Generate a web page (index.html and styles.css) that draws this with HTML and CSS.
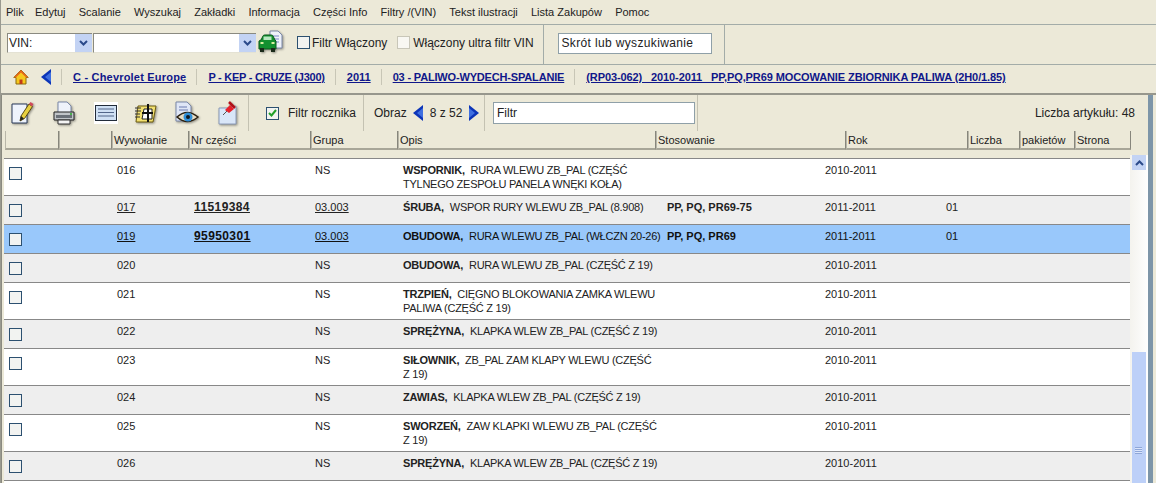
FILE: index.html
```html
<!DOCTYPE html>
<html lang="pl">
<head>
  <meta charset="UTF-8" />
  <title>Katalog części</title>
  <link rel="stylesheet" href="styles.css">
</head>
<body>

  <div class="menubar">
    <span>Plik</span><span>Edytuj</span><span>Scalanie</span><span>Wyszukaj</span><span>Zakładki</span><span>Informacja</span><span>Części Info</span><span>Filtry /(VIN)</span><span>Tekst ilustracji</span><span>Lista Zakupów</span><span>Pomoc</span>
  </div>

  <div class="vinbar">
    <div class="combo vin-type">
      <span class="combo-text">VIN:</span>
      <span class="combo-btn"><svg width="9" height="6" viewBox="0 0 9 6"><path d="M1 1l3.5 3.5L8 1" fill="none" stroke="#2b4a8a" stroke-width="2"/></svg></span>
    </div>
    <div class="combo vin-value">
      <span class="combo-text"></span>
      <span class="combo-btn"><svg width="9" height="6" viewBox="0 0 9 6"><path d="M1 1l3.5 3.5L8 1" fill="none" stroke="#2b4a8a" stroke-width="2"/></svg></span>
    </div>
    <svg class="car-icon" width="25" height="24" viewBox="0 0 25 24">
      <path d="M12 1h8l4 4v13H12z" fill="#eef2fa" stroke="#7a88a8"/>
      <path d="M15 6h6M15 9h6M15 12h6" stroke="#7a88c8"/>
      <path d="M3 10l2-4q.4-1 1.500-1h7q1.100 0 1.500 1l2 4 1 1v8H1v-8z" fill="#13902f" stroke="#0a5a1c"/>
      <rect x="5.500" y="6.500" width="8" height="3.500" fill="#b8e8c0"/>
      <rect x="2.500" y="12" width="3" height="2" fill="#d8f0a0"/>
      <rect x="13.500" y="12" width="3" height="2" fill="#d8f0a0"/>
      <rect x="2" y="18" width="4" height="4" fill="#1a2a1a"/>
      <rect x="13" y="18" width="4" height="4" fill="#1a2a1a"/>
    </svg>
    <label class="check filter-on"><span class="box"></span>Filtr Włączony</label>
    <label class="check filter-ultra"><span class="box box-off"></span>Włączony ultra filtr VIN</label>
    <div class="shortcut-cell">
      <div class="text-input shortcut">Skrót lub wyszukiwanie</div>
    </div>
  </div>

  <div class="crumbs">
    <svg class="home-icon" width="16" height="16" viewBox="0 0 16 16">
      <path d="M8 1L.8 8.500h2.200V15h10V8.500h2.200z" fill="#f6c81e" stroke="#8a6a10"/>
      <path d="M6.500 15v-4.500h3V15" fill="#c03a1a"/>
      <path d="M8 1L.8 8.500h2L8 3.500l5.200 5h2z" fill="#e8651a"/>
    </svg>
    <svg class="back-icon" width="11" height="16" viewBox="0 0 11 16"><path d="M10 0v16L0 8z" fill="#0c35b8"/><path d="M10 3v10L4 8z" fill="#3f6fe0"/></svg>
    <a class="crumb c1">C - Chevrolet Europe</a>
    <a class="crumb c2">P - KEP - CRUZE (J300)</a>
    <a class="crumb c3">2011</a>
    <a class="crumb c4">03 - PALIWO-WYDECH-SPALANIE</a>
    <a class="crumb c5">(RP03-062) &nbsp; 2010-2011 &nbsp; PP,PQ,PR69 MOCOWANIE ZBIORNIKA PALIWA (2H0/1.85)</a>
  </div>

  <div class="panel">
    <div class="panel-main">
      <div class="tools">
        <div class="tool-icons">
          <svg width="24" height="24" viewBox="0 0 24 24">
            <path d="M2 3h15v19H2z" fill="#eef3fc" stroke="#2a3a5a"/>
            <path d="M10 20l1-5L19 3l3.500 2.500-8 12z" fill="#e8d040" stroke="#5a4a10"/>
            <path d="M19 3l1.500-2 3 2-1.500 2.500z" fill="#d04a5a"/>
            <path d="M10 20l1-5 3 2.500z" fill="#222"/>
          </svg>
          <svg width="24" height="24" viewBox="0 0 24 24">
            <path d="M6 1h9l4 4v7H6z" fill="#eef2fa" stroke="#7a88a8"/>
            <path d="M2 11h20v8H2z" fill="#c0c4c8" stroke="#222"/>
            <path d="M4 14h16v3H4z" fill="#6a7078"/>
            <path d="M6 19h12v4H6z" fill="#f4f4f4" stroke="#333"/>
            <circle cx="19" cy="13" r="1" fill="#2a2"/>
          </svg>
          <svg class="flat" width="24" height="22" viewBox="0 0 24 22">
            <rect width="24" height="22" fill="#fff"/>
            <rect x="1.500" y="3.500" width="21" height="15" fill="#cfe0f4" stroke="#222c3a"/>
            <path d="M4 7h16M4 10.500h16M4 14h16" stroke="#52668a"/>
          </svg>
          <svg width="24" height="24" viewBox="0 0 24 24">
            <path d="M4 5h18l-3 16H2z" fill="#f2e070" stroke="#6a5a10"/>
            <path d="M1 7h6M1 10h6M1 13h5M1 16h5" stroke="#333"/>
            <path d="M10 8h8v10H8z" fill="#fff" stroke="#222"/>
            <path d="M14 3v18M8 12h11" stroke="#111" stroke-width="2"/>
          </svg>
          <svg width="26" height="24" viewBox="0 0 26 24">
            <path d="M2 1h11l4 4v15H2z" fill="#dfe6f6" stroke="#7a88a8"/>
            <path d="M5 6h8M5 9h9" stroke="#6a7ab0"/>
            <path d="M3 16q10-9 21 0-11 9-21 0z" fill="#e6dcc4" stroke="#2a2010" stroke-width="1.500"/>
            <circle cx="14" cy="16" r="4.500" fill="#2f8ed8"/>
            <circle cx="14" cy="16" r="2" fill="#101820"/>
          </svg>
          <svg width="20" height="24" viewBox="0 0 20 24">
            <path d="M1 7h8l9-2v18H1z" fill="#d9e6f8" stroke="#8a9ab8"/>
            <path d="M7 9l5-5 4 4-5 4z" fill="#e8202a"/>
            <path d="M11 1l6 6" stroke="#b01018" stroke-width="2.500"/>
            <path d="M9 10l-4 4" stroke="#555"/>
          </svg>
        </div>
        <label class="check year-filter">
          <span class="box box-small"><svg width="9" height="8" viewBox="0 0 9 8"><path d="M1 4l2.500 2.500L8 1" fill="none" stroke="#22a02a" stroke-width="2"/></svg></span>
          Filtr rocznika
        </label>
        <div class="pager">
          <span>Obraz</span>
          <svg width="11" height="16" viewBox="0 0 11 16"><path d="M10 0v16L0 8z" fill="#0c35b8"/><path d="M10 3v10L4 8z" fill="#3f6fe0"/></svg>
          <span>8 z 52</span>
          <svg width="11" height="16" viewBox="0 0 11 16"><path d="M1 0v16L11 8z" fill="#0c35b8"/><path d="M1 3v10L7 8z" fill="#3f6fe0"/></svg>
        </div>
        <div class="filter-cell">
          <div class="text-input filter">Filtr</div>
        </div>
        <div class="count">Liczba artykułu: 48</div>
      </div>

      <div class="grid-head">
        <div class="hc w-a"></div>
        <div class="hc w-b"></div>
        <div class="hc w-call">Wywołanie</div>
        <div class="hc w-part">Nr części</div>
        <div class="hc w-group">Grupa</div>
        <div class="hc w-desc">Opis</div>
        <div class="hc w-app">Stosowanie</div>
        <div class="hc w-year">Rok</div>
        <div class="hc w-qty">Liczba</div>
        <div class="hc w-pack">pakietów</div>
        <div class="hc w-page">Strona</div>
      </div>

      <div class="grid-wrap">
        <div class="rows">
          <div class="row">
            <span class="box"></span><div>016</div><div></div><div>NS</div>
            <div class="desc"><b>WSPORNIK,</b> RURA WLEWU ZB_PAL (CZĘŚĆ<br>TYLNEGO ZESPOŁU PANELA WNĘKI KOŁA)</div>
            <div></div><div>2010-2011</div><div></div>
          </div>
          <div class="row alt">
            <span class="box"></span><div><u>017</u></div><div class="part">11519384</div><div><u>03.003</u></div>
            <div class="desc"><b>ŚRUBA,</b> WSPOR RURY WLEWU ZB_PAL (8.908)</div>
            <div class="app">PP, PQ, PR69-75</div><div>2011-2011</div><div>01</div>
          </div>
          <div class="row selected">
            <span class="box"></span><div><u>019</u></div><div class="part">95950301</div><div><u>03.003</u></div>
            <div class="desc"><b>OBUDOWA,</b> RURA WLEWU ZB_PAL (WŁCZN 20-26)</div>
            <div class="app">PP, PQ, PR69</div><div>2011-2011</div><div>01</div>
          </div>
          <div class="row alt">
            <span class="box"></span><div>020</div><div></div><div>NS</div>
            <div class="desc"><b>OBUDOWA,</b> RURA WLEWU ZB_PAL (CZĘŚĆ Z 19)</div>
            <div></div><div>2010-2011</div><div></div>
          </div>
          <div class="row">
            <span class="box"></span><div>021</div><div></div><div>NS</div>
            <div class="desc"><b>TRZPIEŃ,</b> CIĘGNO BLOKOWANIA ZAMKA WLEWU<br>PALIWA (CZĘŚĆ Z 19)</div>
            <div></div><div>2010-2011</div><div></div>
          </div>
          <div class="row alt">
            <span class="box"></span><div>022</div><div></div><div>NS</div>
            <div class="desc"><b>SPRĘŻYNA,</b> KLAPKA WLEW ZB_PAL (CZĘŚĆ Z 19)</div>
            <div></div><div>2010-2011</div><div></div>
          </div>
          <div class="row">
            <span class="box"></span><div>023</div><div></div><div>NS</div>
            <div class="desc"><b>SIŁOWNIK,</b> ZB_PAL ZAM KLAPY WLEWU (CZĘŚĆ<br>Z 19)</div>
            <div></div><div>2010-2011</div><div></div>
          </div>
          <div class="row alt">
            <span class="box"></span><div>024</div><div></div><div>NS</div>
            <div class="desc"><b>ZAWIAS,</b> KLAPKA WLEW ZB_PAL (CZĘŚĆ Z 19)</div>
            <div></div><div>2010-2011</div><div></div>
          </div>
          <div class="row">
            <span class="box"></span><div>025</div><div></div><div>NS</div>
            <div class="desc"><b>SWORZEŃ,</b> ZAW KLAPKI WLEWU ZB_PAL (CZĘŚĆ<br>Z 19)</div>
            <div></div><div>2010-2011</div><div></div>
          </div>
          <div class="row alt">
            <span class="box"></span><div>026</div><div></div><div>NS</div>
            <div class="desc"><b>SPRĘŻYNA,</b> KLAPKA WLEW ZB_PAL (CZĘŚĆ Z 19)</div>
            <div></div><div>2010-2011</div><div></div>
          </div>
        </div>
        <div class="scrollbar">
          <div class="scroll-up"><svg width="9" height="6" viewBox="0 0 9 6"><path d="M1 5l3.500-3.500L8 5" fill="none" stroke="#2b4a8a" stroke-width="2"/></svg></div>
          <div class="scroll-thumb">
            <span class="grip"></span>
          </div>
        </div>
      </div>
    </div>
    <div class="edge"></div>
  </div>

</body>
</html>
```

FILE: styles.css
```css
body {
  margin: 0;
  height: 483px;
  overflow: hidden;
  background: #ece9d8;
  font-family: 'Liberation Sans', Arial, sans-serif;
  font-size: 11px;
  color: #222;
  border-left: 1px solid #9a9a90;
  box-sizing: border-box;
}

.menubar {
  display: flex;
  gap: 13.2px;
  height: 25px;
  padding-left: 5px;
  align-items: center;
  box-sizing: border-box;
  border-bottom: 1px solid #a3aca8;
}

.menubar span:first-child {
  margin-right: -2px;
}

.vinbar {
  display: flex;
  align-items: center;
  height: 40px;
  box-sizing: border-box;
  border-bottom: 1px solid #a3aca8;
}

.combo {
  display: flex;
  height: 20px;
  margin-bottom: 4px;
  background: #fff;
  border: 1px solid #8a8a80;
  border-right: none;
  border-bottom-color: #e4e2d4;
  box-sizing: border-box;
}

.vin-type {
  width: 85px;
  margin-left: 6px;
}

.vin-value {
  width: 163px;
  margin-left: 1px;
}

.combo-text {
  flex: 1;
  font-size: 12px;
  line-height: 18px;
  padding-left: 1px;
}

.combo-btn {
  width: 17px;
  background: #c3d3f4;
  display: flex;
  align-items: center;
  justify-content: center;
}

.car-icon {
  margin: 0 0 5px 2px;
  filter: drop-shadow(1px 1px 1px rgba(0, 0, 0, 0.4));
}

.check {
  display: flex;
  align-items: center;
  font-size: 12px;
}

.box {
  display: block;
  width: 13px;
  height: 13px;
  box-sizing: border-box;
  border: 1px solid #2c5070;
  background: #f2f3f1;
}

.box-off {
  border-color: #c8c6b8;
  background: #f8f7f2;
}

.filter-on {
  margin: 0 0 4px 14px;
  gap: 2px;
}

.filter-ultra {
  margin: 0 0 4px 10px;
  gap: 3px;
  letter-spacing: -0.05px;
}

.shortcut-cell {
  display: flex;
  align-items: center;
  align-self: stretch;
  margin-left: 9px;
  padding: 0 12px 2px 14px;
  border-left: 1px solid #a3aca8;
  border-right: 1px solid #a3aca8;
}

.text-input {
  background: #fff;
  border: 1px solid #8fa0a8;
  box-sizing: border-box;
  font-size: 12px;
  padding-left: 3px;
}

.shortcut {
  width: 154px;
  height: 21px;
  line-height: 19px;
  letter-spacing: 0.35px;
}

.crumbs {
  display: flex;
  align-items: center;
  height: 30px;
  padding-bottom: 4px;
  box-sizing: border-box;
  border-bottom: 2px solid #97978d;
}

.home-icon {
  margin-left: 12px;
}

.back-icon {
  margin-left: 12px;
  margin-right: 9px;
}

.crumb {
  font-weight: bold;
  color: #10178a;
  text-decoration: underline;
  white-space: pre;
  line-height: 16px;
  border-left: 1px solid #c8c6b6;
  padding: 0 10px 0 11px;
}

.c1 { letter-spacing: 0.2px; }
.c2 { letter-spacing: -0.25px; }
.c3 { letter-spacing: 0; }
.c4 { letter-spacing: -0.17px; }
.c5 { letter-spacing: -0.1px; }

.panel {
  display: flex;
  height: 388px;
  border-left: 1px solid #8a8a80;
}

.panel-main {
  flex: 1;
  min-width: 0;
}

.edge {
  width: 5px;
  margin-right: 3px;
  background: #7d95a8;
}

.tools {
  display: flex;
  align-items: center;
  height: 36px;
  box-sizing: border-box;
  padding-right: 13px;
}

.tool-icons {
  display: flex;
  align-items: center;
  gap: 18px;
  width: 247px;
  height: 100%;
  padding-left: 8px;
  box-sizing: border-box;
  border-right: 1px solid #c4c2b2;
}

.tool-icons svg {
  flex: none;
  filter: drop-shadow(1px 1px 1px rgba(0, 0, 0, 0.4));
}

.tool-icons svg.flat {
  filter: none;
}

.tool-icons svg:nth-child(4),
.tool-icons svg:nth-child(5) {
  margin-left: -2px;
}

.year-filter {
  gap: 9px;
  width: 115px;
  height: 100%;
  padding-left: 17px;
  box-sizing: border-box;
  border-right: 1px solid #c4c2b2;
}

.box-small {
  display: flex;
  align-items: center;
  justify-content: center;
}

.pager {
  display: flex;
  align-items: center;
  gap: 6px;
  width: 121px;
  height: 100%;
  padding-left: 10px;
  box-sizing: border-box;
  font-size: 12px;
  border-right: 1px solid #c4c2b2;
}

.filter-cell {
  display: flex;
  align-items: center;
  width: 213px;
  height: 100%;
  padding-left: 8px;
  box-sizing: border-box;
  border-right: 1px solid #c4c2b2;
}

.filter {
  width: 202px;
  height: 22px;
  line-height: 20px;
}

.count {
  margin-left: auto;
  font-size: 12px;
}

.grid-head {
  display: flex;
  height: 19px;
  margin-left: 3px;
  width: 1126px;
}

.hc {
  box-sizing: border-box;
  border-left: 1px solid #b8b6a8;
  border-right: 1px solid #87867c;
  border-bottom: 2px solid #a8a698;
  padding-left: 1px;
  line-height: 18px;
  white-space: nowrap;
}

.w-a { width: 54px; }
.w-b { width: 53px; }
.w-call { width: 77px; }
.w-part { width: 122px; }
.w-group { width: 87px; }
.w-desc { width: 258px; }
.w-app { width: 190px; }
.w-year { width: 122px; }
.w-qty { width: 52px; }
.w-pack { width: 55px; }
.w-page { width: 56px; }

.grid-wrap {
  display: flex;
  margin-top: 5px;
  overflow: hidden;
  height: 328px;
}

.rows {
  width: 1126px;
  margin: 3px 0 0 2px;
  background: #fff;
  border-top: 1px solid #888;
}

.row {
  display: grid;
  grid-template-columns: 113px 77px 121px 88px 264px 158px 121px 1fr;
  min-height: 20px;
  padding: 4px 0;
  line-height: 14px;
  border-bottom: 1px solid #888;
}

.row .box {
  margin: 4px 0 0 5px;
}

.alt {
  background: #eeeeee;
}

.selected {
  background: #99c8fb;
  color: #111;
}

.part {
  font-weight: bold;
  font-size: 12px;
  text-decoration: underline;
  letter-spacing: 0.4px;
}

.desc {
  white-space: nowrap;
  letter-spacing: -0.25px;
}

.desc b {
  margin-right: 3px;
  letter-spacing: -0.2px;
}

.app {
  font-weight: bold;
}

.scrollbar {
  flex: 1;
  position: relative;
  background: linear-gradient(90deg, #f4f3ee, #fefefe);
  padding: 0 2px;
}

.scroll-up {
  width: 14px;
  height: 15px;
  margin: 0 auto;
  background: #c3d3f4;
  display: flex;
  align-items: center;
  justify-content: center;
}

.scroll-thumb {
  position: absolute;
  top: 197px;
  left: 2px;
  width: 14px;
  height: 140px;
  background: #bdd0f8;
}

.grip {
  position: absolute;
  top: 95px;
  left: 3px;
  width: 7px;
  height: 7px;
  background: repeating-linear-gradient(180deg, #8ea6d8 0, #8ea6d8 1px, #dbe5fb 1px, #dbe5fb 2px);
}
```
